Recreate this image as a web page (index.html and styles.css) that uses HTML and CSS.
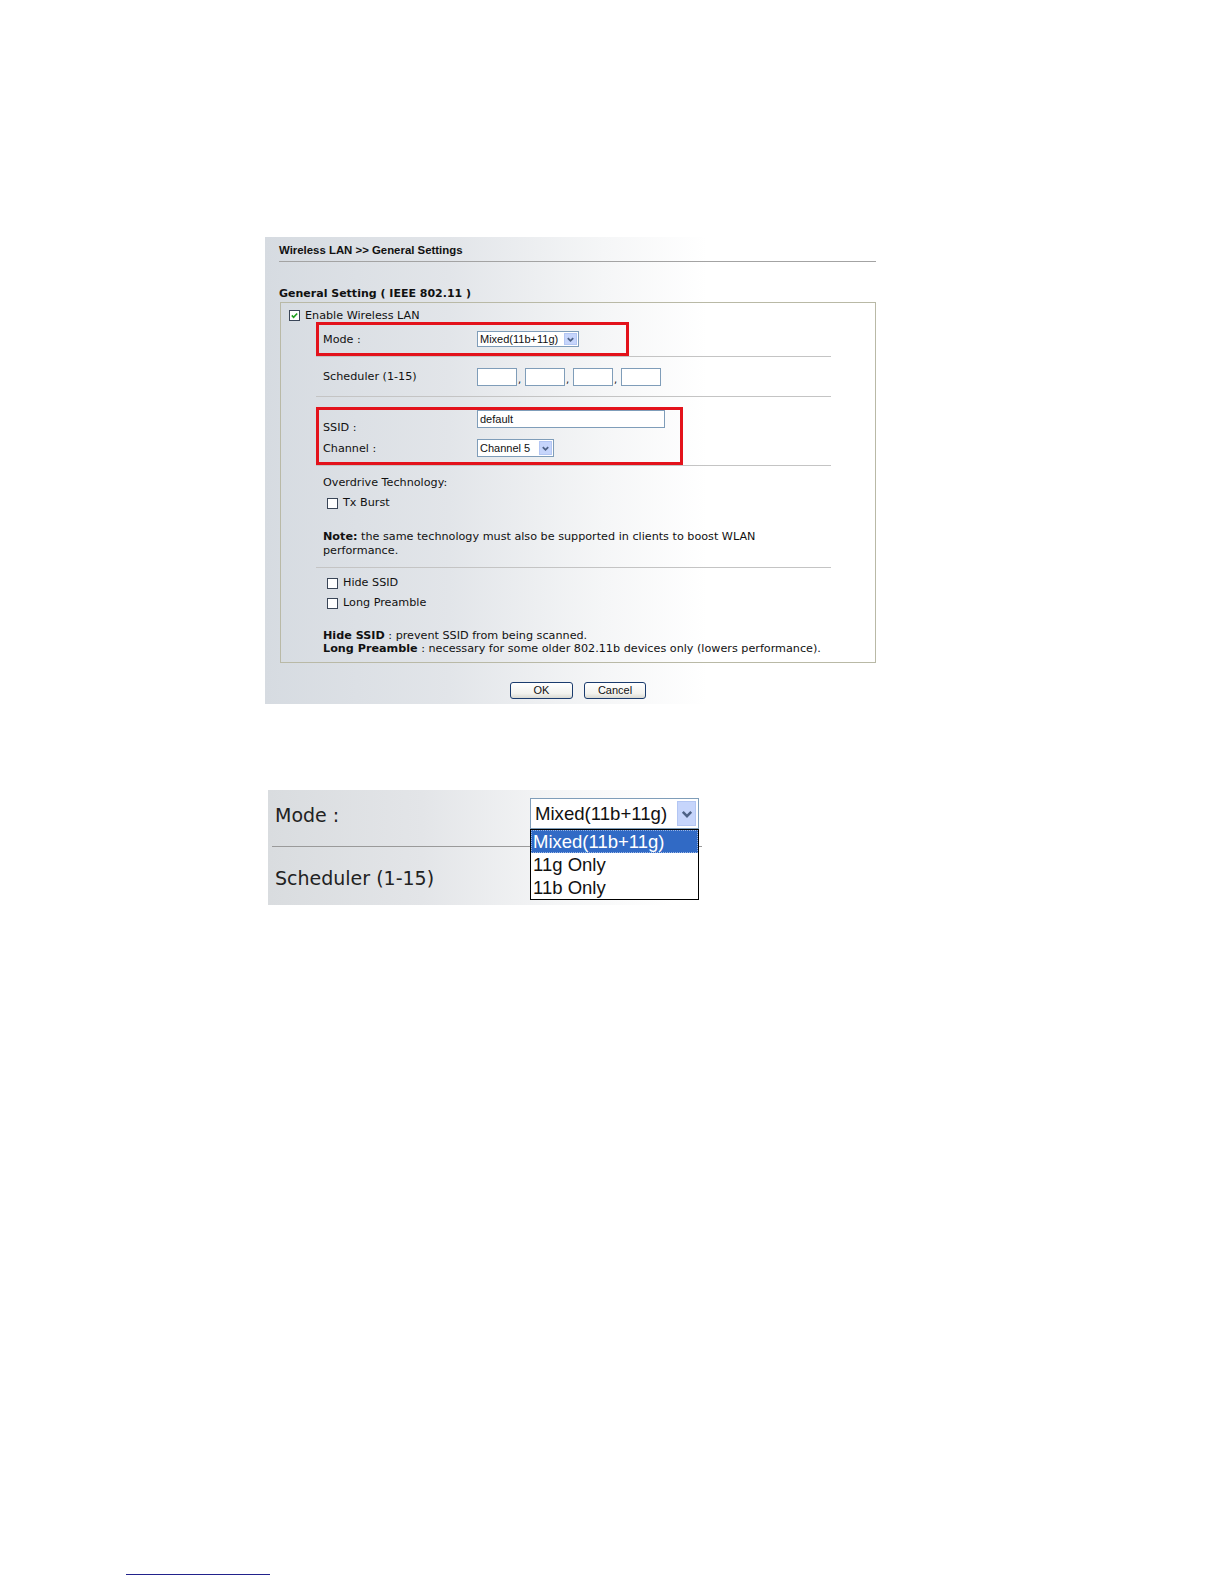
FILE: index.html
```html
<!DOCTYPE html>
<html lang="en">
<head>
  <meta charset="UTF-8">
  <title>Wireless LAN &gt;&gt; General Settings</title>
  <link rel="stylesheet" href="styles.css">
</head>
<body>

  <!-- Screenshot 1: General Settings page -->
  <div class="shot">
    <div class="titlebar">Wireless LAN &gt;&gt; General Settings</div>
    <div class="legend">General Setting ( IEEE 802.11 )</div>

    <div class="box">
      <div class="check first">
        <span class="cb">
          <svg viewBox="0 0 11 11"><path d="M2.2 5.4 L4.4 7.6 L8.8 3" fill="none" stroke="#21a121" stroke-width="2"/></svg>
        </span>
        Enable Wireless LAN
      </div>

      <div class="sect">
        <div class="mark mark-mode">
          <div class="row mode-row">
            <span class="lbl">Mode :</span>
            <span class="sel sel-mode">Mixed(11b+11g)
              <i class="arr"><svg viewBox="0 0 10 10"><path d="M2 3.5 L5 6.5 L8 3.5" fill="none" stroke="#4d6185" stroke-width="2"/></svg></i>
            </span>
          </div>
        </div>
        <div class="rule"></div>

        <div class="row sched-row">
          <span class="lbl">Scheduler (1-15)</span>
          <span class="inputs">
            <span class="txt"></span><span class="comma">,</span>
            <span class="txt"></span><span class="comma">,</span>
            <span class="txt"></span><span class="comma">,</span>
            <span class="txt"></span>
          </span>
        </div>
        <div class="rule"></div>

        <div class="mark mark-ssid">
          <div class="row ssid-row">
            <span class="lbl">SSID :</span>
            <span class="txt wide">default</span>
          </div>
          <div class="row chan-row">
            <span class="lbl">Channel :</span>
            <span class="sel sel-chan">Channel 5
              <i class="arr"><svg viewBox="0 0 10 10"><path d="M2 3.5 L5 6.5 L8 3.5" fill="none" stroke="#4d6185" stroke-width="2"/></svg></i>
            </span>
          </div>
        </div>
        <div class="rule"></div>

        <p class="plain overdrive">Overdrive Technology:</p>
        <div class="check sub tx"><span class="cb"></span>Tx Burst</div>

        <p class="plain note"><b>Note:</b> the same technology must also be supported in clients to boost WLAN<br>performance.</p>
        <div class="rule"></div>

        <div class="check sub hide"><span class="cb"></span>Hide SSID</div>
        <div class="check sub long"><span class="cb"></span>Long Preamble</div>

        <p class="plain desc"><b>Hide SSID</b> : prevent SSID from being scanned.<br><b>Long Preamble</b> : necessary for some older 802.11b devices only (lowers performance).</p>
      </div>
    </div>

    <div class="btns">
      <span class="btn ok">OK</span>
      <span class="btn cancel">Cancel</span>
    </div>
  </div>

  <!-- Screenshot 2: Mode drop-down open -->
  <div class="shot2">
    <div class="big-row">
      <span class="big-lbl">Mode :</span>
      <span class="big-sel">Mixed(11b+11g)
        <i class="big-arr"><svg viewBox="0 0 10 10"><path d="M2 3.5 L5 6.5 L8 3.5" fill="none" stroke="#4d6185" stroke-width="1.8"/></svg></i>
      </span>
    </div>
    <div class="big-rule"></div>
    <div class="big-lbl sched2">Scheduler (1-15)</div>

    <ul class="droplist">
      <li class="picked">Mixed(11b+11g)</li>
      <li>11g Only</li>
      <li>11b Only</li>
    </ul>
  </div>

  <div class="footline"></div>

</body>
</html>
```

FILE: styles.css
```css
body {
  margin: 0;
  background-color: #fff;
  font-family: "DejaVu Sans", Verdana, sans-serif;
  color: #111;
}

/* ---------- screenshot 1 ---------- */

.shot {
  margin: 237px 0 0 265px;
  width: 614px;
  height: 467px;
  box-sizing: border-box;
  padding: 6px 0 0 14px;
  background: linear-gradient(to right, #d6dbe1 0%, #e2e5e9 30%, #f5f6f7 55%, #ffffff 72%);
}

.titlebar {
  width: 597px;
  font: bold 11.4px "Liberation Sans", Arial, sans-serif;
  line-height: 14px;
  padding-bottom: 4px;
  border-bottom: 1px solid #a3a3a3;
}

.legend {
  margin-top: 25px;
  font: bold 11px "DejaVu Sans", Verdana, sans-serif;
  line-height: 14px;
}

.box {
  margin: 1px 0 0 1px;
  width: 596px;
  box-sizing: border-box;
  border: 1px solid #b9b9a6;
  padding: 6px 0 7px 0;
  font-size: 11.2px;
}

.check {
  display: flex;
  align-items: center;
  height: 14px;
  line-height: 14px;
}

.check.first {
  padding-left: 8px;
  height: 13px;
}

.cb {
  width: 11px;
  height: 11px;
  box-sizing: border-box;
  border: 1px solid #3a4658;
  background-color: #fff;
  margin-right: 5px;
  display: flex;
}

.cb svg {
  width: 9px;
  height: 9px;
}

.sect {
  margin-left: 35px;
  width: 515px;
}

.mark {
  border: 3px solid #e3121b;
  box-sizing: border-box;
}

.mark-mode {
  width: 313px;
  height: 34px;
}

.mark-ssid {
  margin-top: 10px;
  width: 367px;
  height: 58px;
}

.row {
  display: flex;
  align-items: center;
  padding-left: 7px;
}

.mark .row {
  padding-left: 4px;
}

.lbl {
  width: 154px;
  flex: none;
}

.mode-row {
  height: 28px;
}

.sched-row {
  height: 39px;
}

.ssid-row {
  height: 24px;
  align-items: flex-start;
}

.ssid-row .lbl {
  padding-top: 11px;
}

.chan-row {
  height: 28px;
}

.rule {
  border-top: 1px solid #c4c4c4;
}

.sel {
  display: inline-flex;
  align-items: center;
  justify-content: space-between;
  box-sizing: border-box;
  border: 1px solid #7f9db9;
  background-color: #fff;
  font: 11px "Liberation Sans", Arial, sans-serif;
  padding-left: 2px;
}

.sel-mode {
  width: 102px;
  height: 16px;
}

.sel-chan {
  width: 77px;
  height: 18px;
}

.arr {
  width: 13px;
  align-self: stretch;
  margin: 1px;
  background-color: #c6d5fb;
  border: 1px solid #b3c6f3;
  box-sizing: border-box;
  display: flex;
  align-items: center;
  justify-content: center;
}

.arr svg {
  width: 9px;
  height: 9px;
}

.inputs {
  display: flex;
  align-items: flex-end;
}

.txt {
  display: inline-block;
  width: 40px;
  height: 18px;
  box-sizing: border-box;
  border: 1px solid #7f9db9;
  background-color: #fff;
  font: 11px "Liberation Sans", Arial, sans-serif;
  line-height: 16px;
  padding-left: 2px;
}

.txt.wide {
  width: 188px;
}

.comma {
  width: 8px;
  font-size: 10px;
  line-height: 12px;
  padding-left: 1px;
  box-sizing: border-box;
}

.plain {
  margin: 0;
  padding-left: 7px;
  line-height: 14px;
}

.overdrive {
  margin-top: 10px;
}

.check.sub {
  padding-left: 11px;
}

.tx {
  margin-top: 6px;
}

.note {
  margin-top: 20px;
  margin-bottom: 9px;
}

.hide {
  margin-top: 8px;
}

.long {
  margin-top: 6px;
}

.desc {
  margin-top: 19px;
  line-height: 13px;
}

.btns {
  margin: 19px 0 0 1px;
  width: 596px;
  display: flex;
  justify-content: center;
  gap: 11px;
}

.btn {
  height: 17px;
  box-sizing: border-box;
  border: 1px solid #1b3c6e;
  border-radius: 3px;
  background: linear-gradient(#ffffff, #f2f2ee 70%, #d9d9d2);
  font: 11px "Liberation Sans", Arial, sans-serif;
  line-height: 15px;
  text-align: center;
}

.btn.ok {
  width: 63px;
}

.btn.cancel {
  width: 62px;
}

/* ---------- screenshot 2 ---------- */

.shot2 {
  position: relative;
  margin: 86px 0 0 268px;
  width: 440px;
  height: 115px;
  box-sizing: border-box;
  padding: 8px 0 0 7px;
  background: linear-gradient(to right, #d9dcdf 0%, #e3e5e8 35%, #f4f5f6 65%, #ffffff 92%);
}

.big-row {
  display: flex;
  align-items: center;
  height: 31px;
}

.big-lbl {
  width: 255px;
  font-size: 19px;
  color: #222;
  padding-top: 3px;
}

.big-sel {
  display: flex;
  align-items: center;
  justify-content: space-between;
  width: 169px;
  height: 31px;
  box-sizing: border-box;
  border: 1px solid #7f9db9;
  background-color: #fff;
  font: 18.6px "Liberation Sans", Arial, sans-serif;
  padding-left: 4px;
}

.big-arr {
  width: 19px;
  align-self: stretch;
  margin: 2px;
  background-color: #c6d5fb;
  border: 1px solid #b3c6f3;
  box-sizing: border-box;
  display: flex;
  align-items: center;
  justify-content: center;
}

.big-arr svg {
  width: 14px;
  height: 14px;
}

.big-rule {
  margin: 17px 0 0 -3px;
  width: 430px;
  border-top: 1px solid #9a9a9a;
}

.sched2 {
  margin-top: 20px;
  line-height: 23px;
  padding-top: 0;
}

.droplist {
  position: absolute;
  left: 262px;
  top: 39px;
  width: 169px;
  margin: 0;
  padding: 0;
  list-style: none;
  box-sizing: border-box;
  border: 1px solid #000;
  background-color: #fff;
  font: 18.5px "Liberation Sans", Arial, sans-serif;
  line-height: 23px;
}

.droplist li {
  padding-left: 2px;
  height: 23px;
}

.droplist li.picked {
  background-color: #316ac5;
  color: #fff;
  outline: 1px dotted #9ab6e6;
  outline-offset: -1px;
}

/* ---------- footnote line ---------- */

.footline {
  margin: 669px 0 0 126px;
  width: 144px;
  border-top: 1px solid #22228c;
}
```
